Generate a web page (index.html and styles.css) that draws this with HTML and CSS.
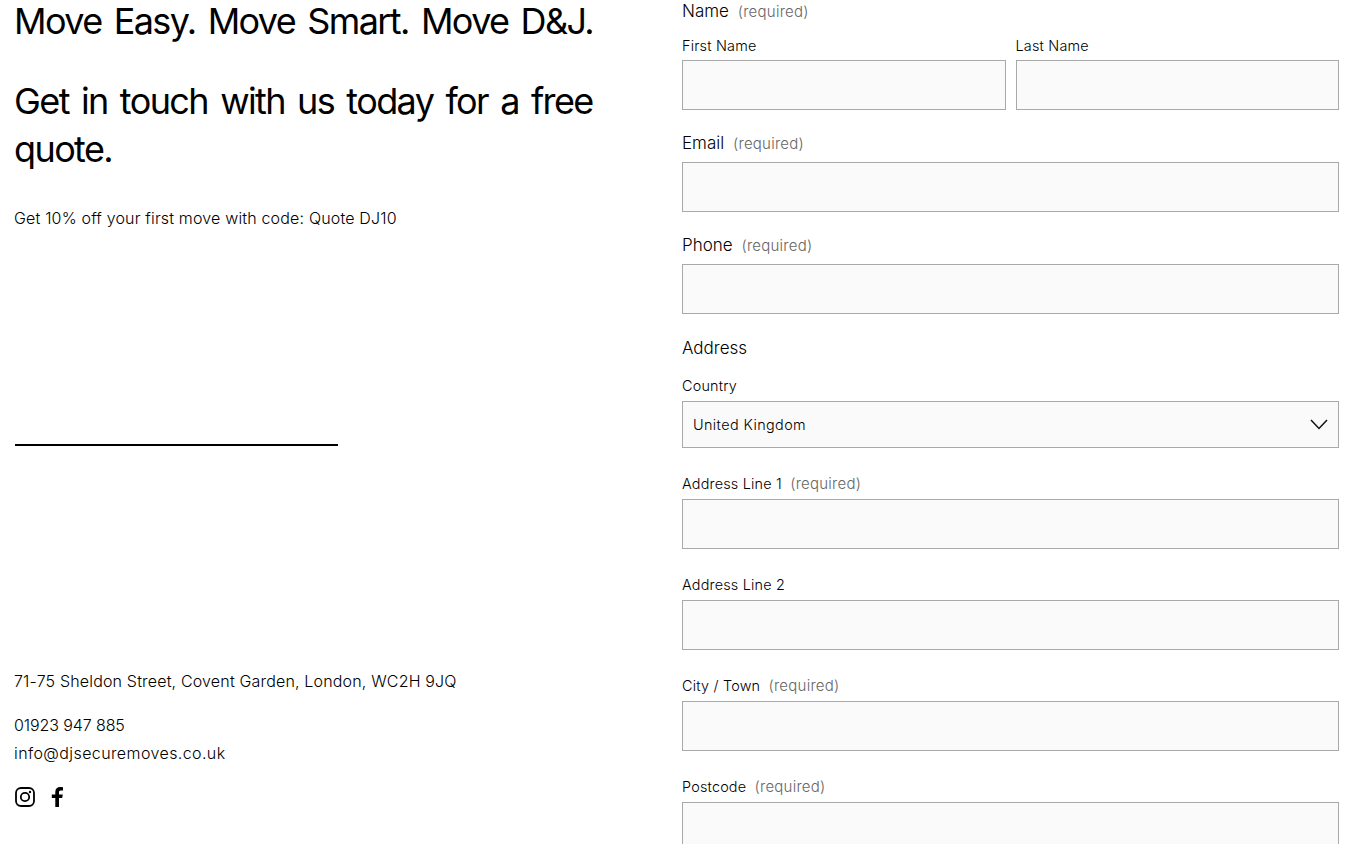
FILE: index.html
```html
<!DOCTYPE html>
<html lang="en">
<head>
  <meta charset="UTF-8">
  <title>Get a Quote</title>
  <link rel="stylesheet" href="styles.css">
</head>
<body>
  <div class="page">
    <!-- Left column -->
    <div class="intro">
      <h2 class="tagline">Move Easy. Move Smart. Move D&amp;J.</h2>
      <h2 class="headline">Get in touch with us today for a free quote.</h2>
      <p class="promo">Get 10% off your first move with code: Quote DJ10</p>
      <div class="divider"></div>
      <div class="contact">
        <p class="address">71-75 Sheldon Street, Covent Garden, London, WC2H 9JQ</p>
        <p class="phone">01923 947 885</p>
        <p class="mail">info@djsecuremoves.co.uk</p>
        <div class="social">
          <a href="#" aria-label="Instagram">
            <svg width="20" height="20" viewBox="0 0 20 20" fill="none" stroke="#000">
              <rect x="1" y="1" width="18" height="18" rx="5" stroke-width="1.800"/>
              <circle cx="10" cy="10" r="4.2" stroke-width="1.800"/>
              <circle cx="15" cy="5" r="1.2" fill="#000" stroke="none"/>
            </svg>
          </a>
          <a href="#" aria-label="Facebook">
            <svg width="12" height="20" viewBox="0 0 12 20" fill="#000">
              <path d="M8 20V11h3.2l.6-3.6H8V5.3C8 4.2 8.4 3.5 9.8 3.5H12V.3C11.5.2 10.400 0 9.200 0 6.300 0 4.300 1.800 4.300 4.900v2.500H.8V11h3.500v9z"/>
            </svg>
          </a>
        </div>
      </div>
    </div>

    <!-- Form column -->
    <form class="quote-form">
      <div class="legend name-legend">Name <span class="req">(required)</span></div>
      <div class="name-row">
        <div>
          <label class="small-label name-label" for="firstName">First Name</label>
          <input type="text" id="firstName">
        </div>
        <div>
          <label class="small-label name-label" for="lastName">Last Name</label>
          <input type="text" id="lastName">
        </div>
      </div>

      <div class="field">
        <label class="legend" for="email">Email <span class="req">(required)</span></label>
        <input type="text" id="email">
      </div>

      <div class="field">
        <label class="legend" for="phone">Phone <span class="req">(required)</span></label>
        <input type="text" id="phone">
      </div>

      <div class="legend address-legend">Address</div>

      <div>
        <label class="small-label" for="country">Country</label>
        <div class="select-wrap">
          <select id="country">
            <option>United Kingdom</option>
          </select>
          <svg class="chevron" width="18" height="11" viewBox="0 0 18 11" fill="none" stroke="#111" stroke-width="1.500">
            <path d="M1 1l8 8.500L17 1"/>
          </svg>
        </div>
      </div>

      <div class="sub-field">
        <label class="small-label" for="line1">Address Line 1 <span class="req">(required)</span></label>
        <input type="text" id="line1">
      </div>

      <div class="sub-field">
        <label class="small-label" for="line2">Address Line 2</label>
        <input type="text" id="line2">
      </div>

      <div class="sub-field">
        <label class="small-label" for="city">City / Town <span class="req">(required)</span></label>
        <input type="text" id="city">
      </div>

      <div class="sub-field">
        <label class="small-label" for="postcode">Postcode <span class="req">(required)</span></label>
        <input type="text" id="postcode">
      </div>
    </form>
  </div>
</body>
</html>
```

FILE: styles.css
```css
html, body {
  margin: 0;
  padding: 0;
  height: 844px;
  overflow: hidden;
  background: #fff;
}

body {
  font-family: "Inter", "Liberation Sans", sans-serif;
  font-weight: 300;
  font-size: 16px;
  color: #000;
}

.page {
  display: grid;
  grid-template-columns: 640px 657px;
  column-gap: 28px;
  padding-left: 14px;
}

h2 {
  margin: 0;
  font-family: "Inter", "Liberation Sans", sans-serif;
  font-weight: 400;
  font-size: 36px;
  letter-spacing: -1.6px;
  word-spacing: 3.6px;
}

.tagline {
  line-height: 42px;
}

.headline {
  line-height: 48px;
  margin-top: 35px;
  max-width: 600px;
}

p {
  margin: 0;
  line-height: 28px;
  letter-spacing: 0.17px;
}

.promo {
  margin-top: 31px;
}

.divider {
  width: 323px;
  height: 2px;
  margin: 212px 0 0 1px;
  background: #000;
}

.contact {
  margin-top: 221px;
}

.address {
  margin-bottom: 16px;
}

.phone {
  letter-spacing: -0.1px;
}

.mail {
  letter-spacing: 0.4px;
}

.social {
  display: flex;
  align-items: center;
  gap: 16px;
  margin-top: 20px;
}

.social a {
  display: flex;
}

.social a:first-child {
  margin-left: 1px;
}

/* form */
.legend {
  display: block;
  line-height: 24px;
  margin-bottom: 7px;
  font-size: 17px;
}

.req {
  margin-left: 4px;
  color: #666;
  font-size: 15px;
  letter-spacing: 0.25px;
  line-height: 1;
}

.name-legend {
  line-height: 22px;
  margin-bottom: 12px;
}

.name-row {
  display: grid;
  grid-template-columns: 1fr 1fr;
  column-gap: 10px;
  margin-bottom: 21px;
}

.small-label {
  display: block;
  line-height: 24px;
  margin-bottom: 3px;
  font-size: 14.4px;
  letter-spacing: 0.2px;
}

.name-label {
  margin-bottom: 2px;
}

input[type="text"], select {
  display: block;
  width: 100%;
  box-sizing: border-box;
  height: 50px;
  padding: 0 10px;
  border: 1px solid #a9a9a9;
  border-radius: 0;
  background: #fafafa;
  font: inherit;
  font-size: 14.4px;
  letter-spacing: 0.4px;
  color: #000;
}

.field {
  margin-bottom: 21px;
}

.address-legend {
  line-height: 26px;
  margin-bottom: 13px;
}

.select-wrap {
  position: relative;
}

select {
  height: 47px;
  appearance: none;
}

.chevron {
  position: absolute;
  top: 18px;
  right: 11px;
}

.sub-field {
  margin-top: 24px;
}
```
